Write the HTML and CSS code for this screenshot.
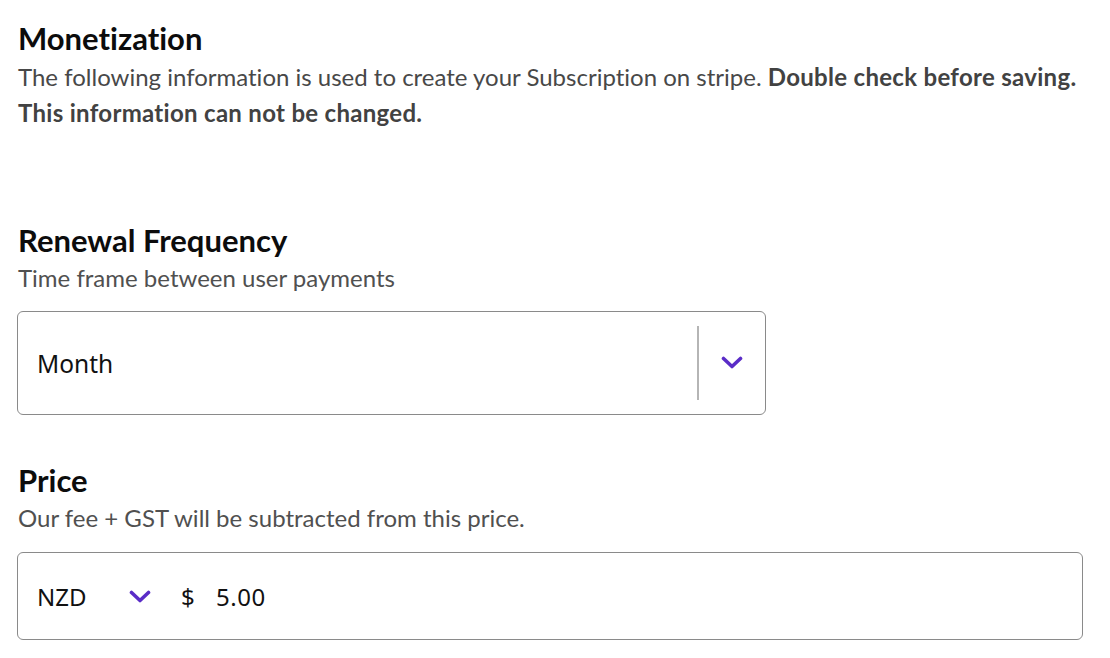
FILE: index.html
```html
<!DOCTYPE html>
<html lang="en">
<head>
<meta charset="utf-8">
<title>Monetization</title>
<link rel="stylesheet" href="styles.css">
</head>
<body>
<main class="page">
  <section class="intro">
    <h2 class="section-title">Monetization</h2>
    <p class="desc">The following information is used to create your Subscription on stripe. <strong>Double check before saving. This information can not be changed.</strong></p>
  </section>

  <section class="field field-renewal">
    <h3 class="field-title">Renewal Frequency</h3>
    <p class="field-help">Time frame between user payments</p>
    <div class="select">
      <span class="select-value">Month</span>
      <span class="select-sep"></span>
      <span class="select-indicator">
        <svg class="chev" width="22" height="14" viewBox="0 0 22 14"><path d="M2.5 2.5 L11 10.5 L19.5 2.5" fill="none" stroke="#5a2cc7" stroke-width="3.6" stroke-linecap="round" stroke-linejoin="round"/></svg>
      </span>
    </div>
  </section>

  <section class="field field-price">
    <h3 class="field-title">Price</h3>
    <p class="field-help">Our fee + GST will be subtracted from this price.</p>
    <div class="price-input">
      <span class="currency">NZD</span>
      <svg class="chev chev-small" width="22" height="14" viewBox="0 0 22 14"><path d="M2.5 2.5 L11 10.5 L19.5 2.5" fill="none" stroke="#5a2cc7" stroke-width="3.6" stroke-linecap="round" stroke-linejoin="round"/></svg>
      <span class="symbol">$</span>
      <span class="amount">5.00</span>
    </div>
  </section>
</main>
</body>
</html>
```

FILE: styles.css
```css
* { box-sizing: border-box; }
html, body { margin: 0; padding: 0; background: #ffffff; }
body {
  font-family: Lato, "Noto Sans", sans-serif;
  font-variant-ligatures: none;
}

.page {
  padding: 20px 27px 0 18px;
  display: flex;
  flex-direction: column;
}

.section-title, .field-title {
  margin: 0;
  font-family: Lato, "Noto Sans", sans-serif;
  font-weight: 700;
  font-size: 31px;
  line-height: 36px;
  color: #0c0c0c;
}

.desc {
  margin: 3px 0 0;
  font-size: 24px;
  line-height: 36px;
  color: #484848;
}
.desc strong { font-weight: 700; color: #424242; letter-spacing: 0.3px; }

.field-renewal { margin-top: 91px; }
.field-price { margin-top: 47px; }

.field-help {
  margin: 2px 0 0;
  font-size: 24px;
  line-height: 36px;
  color: #505050;
}

.select {
  margin-top: 15px;
  margin-left: -1px;
  width: 749px;
  height: 104px;
  border: 1px solid #8a8a8a;
  border-radius: 6px;
  display: flex;
  align-items: center;
  padding-left: 19px;
}
.select-value {
  flex: 1;
  font-family: "Noto Sans", sans-serif;
  font-size: 24.5px;
  color: #111111;
}
.select-sep {
  align-self: stretch;
  width: 2px;
  margin: 14px 0;
  background: #b5b5b5;
}
.select-indicator {
  width: 66px;
  display: flex;
  justify-content: center;
  align-items: center;
}

.price-input {
  margin-top: 16px;
  margin-left: -1px;
  height: 88px;
  border: 1px solid #8a8a8a;
  border-radius: 6px;
  display: flex;
  align-items: center;
  padding-left: 19px;
  font-family: "Noto Sans", sans-serif;
  font-size: 24px;
  color: #111111;
}
.currency { width: 92px; }
.chev-small { margin-top: 2px; }
.symbol { margin-left: 30px; width: 35px; }
.amount { letter-spacing: 0.5px; }
```
